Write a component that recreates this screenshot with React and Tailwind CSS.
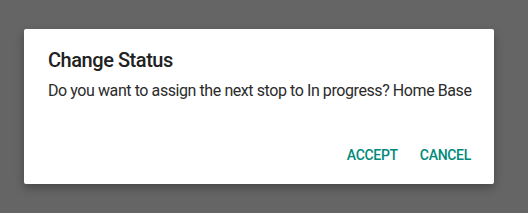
export default function App() {
  return (
    <div className="w-[528px] h-[213px] bg-[#656565] pt-[29px] pl-[24px]" style={{ fontFamily: "Roboto, 'Noto Sans', sans-serif" }}>
      <div className="w-[470px] h-[155px] bg-white rounded-[2px] shadow-[0_4px_10px_rgba(0,0,0,0.3)] flex flex-col">
        <h2 className="mt-[17px] ml-[24px] text-[20px] leading-[28px] font-medium tracking-[-0.45px] text-[#212121]">Change Status</h2>
        <p className="mt-[5px] ml-[24px] text-[16px] leading-[24px] tracking-[-0.42px] whitespace-nowrap text-[#2b2b2b]">
          Do you want to assign the next stop to In progress? Home Base
        </p>
        <div className="mt-auto mb-[19px] flex justify-end pr-[23px] gap-[22px]">
          <button className="text-[14px] leading-[20px] font-medium text-[#00897b] tracking-[-0.3px]">ACCEPT</button>
          <button className="text-[14px] leading-[20px] font-medium text-[#00897b] tracking-[-0.3px]">CANCEL</button>
        </div>
      </div>
    </div>
  );
}
